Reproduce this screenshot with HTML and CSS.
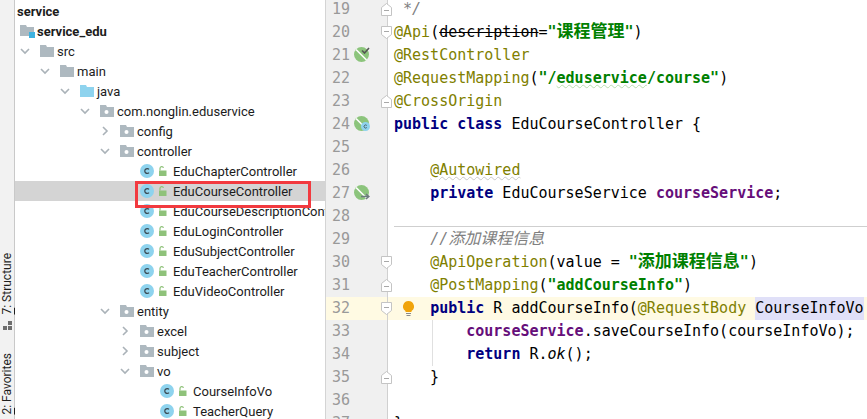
FILE: index.html
```html
<!DOCTYPE html>
<html lang="en">
<head>
<meta charset="utf-8">
<title>EduCourseController</title>
<link rel="stylesheet" href="styles.css">
</head>
<body>
<svg class="defs" width="0" height="0" aria-hidden="true">
  <symbol id="open" viewBox="0 0 10 8"><path d="M1 2l4 4 4-4" fill="none" stroke="#aab2b8" stroke-width="1.6"/></symbol>
  <symbol id="closed" viewBox="0 0 8 10"><path d="M2 1l4 4-4 4" fill="none" stroke="#aab2b8" stroke-width="1.6"/></symbol>
  <symbol id="folder" viewBox="0 0 14 12"><path d="M0 0h6l1 2h7v10H0z" fill="#aeb9c0"/></symbol>
  <symbol id="blue" viewBox="0 0 14 12"><path d="M0 0h6l1 2h7v10H0z" fill="#8ed3ee"/></symbol>
  <symbol id="pkg" viewBox="0 0 14 12"><path d="M0 0h6l1 2h7v10H0z" fill="#aeb9c0"/><circle cx="6.5" cy="7" r="2" fill="#fff"/></symbol>
  <symbol id="module" viewBox="0 0 16 13"><path d="M0 0h6l1 2h7v9H0z" fill="#aeb9c0"/><path d="M9 7h6v6H9z" fill="#3fb2e0"/></symbol>
  <symbol id="cls" viewBox="0 0 14 14"><circle cx="7" cy="7" r="7" fill="#8ed3ee"/><path d="M9 5.400A2.400 2.400 0 1 0 9 8.600" fill="none" stroke="#3b4a52" stroke-width="1.300"/></symbol>
  <symbol id="lock" viewBox="0 0 9 10"><path d="M1 4.500h7.500V10H1z" fill="#8fc27a"/><path d="M2 4.500V2.400a1.800 1.800 0 0 1 3.500-.5" fill="none" stroke="#8fc27a" stroke-width="1.200"/></symbol>
  <symbol id="bean" viewBox="0 0 15 15"><circle cx="7.500" cy="7.500" r="7.500" fill="#8cc47c"/><path d="M2 2.500L12.500 13" stroke="#fff" stroke-width="1.600"/></symbol>
</svg>

<div class="ide">
  <aside class="strip">
    <span class="tool"><u>7</u>: Structure</span>
    <svg class="tool-icon" width="11" height="9" viewBox="0 0 11 9"><path d="M6 0h4v4H6zM1 5h4v4H1zM6 5h4v4H6z" fill="#6e6e6e"/></svg>
    <span class="tool"><u>2</u>: Favorites</span>
  </aside>

  <nav class="tree">
    <div class="row root"><span class="bold">service</span></div>
    <div class="row mod"><svg class="ico-m"><use href="#module"/></svg><span class="bold">service_edu</span></div>
    <div class="row d0"><span class="arr"><svg class="a-o"><use href="#open"/></svg></span><svg class="ico"><use href="#folder"/></svg><span>src</span></div>
    <div class="row d1"><span class="arr"><svg class="a-o"><use href="#open"/></svg></span><svg class="ico"><use href="#folder"/></svg><span>main</span></div>
    <div class="row d2"><span class="arr"><svg class="a-o"><use href="#open"/></svg></span><svg class="ico"><use href="#blue"/></svg><span>java</span></div>
    <div class="row d3"><span class="arr"><svg class="a-o"><use href="#open"/></svg></span><svg class="ico"><use href="#pkg"/></svg><span>com.nonglin.eduservice</span></div>
    <div class="row d4"><span class="arr"><svg class="a-c"><use href="#closed"/></svg></span><svg class="ico"><use href="#pkg"/></svg><span>config</span></div>
    <div class="row d4"><span class="arr"><svg class="a-o"><use href="#open"/></svg></span><svg class="ico"><use href="#pkg"/></svg><span>controller</span></div>
    <div class="row d5"><span class="arr"></span><svg class="ico-c"><use href="#cls"/></svg><svg class="ico-l"><use href="#lock"/></svg><span>EduChapterController</span></div>
    <div class="row d5 sel"><span class="arr"></span><svg class="ico-c"><use href="#cls"/></svg><svg class="ico-l"><use href="#lock"/></svg><span>EduCourseController</span></div>
    <div class="row d5"><span class="arr"></span><svg class="ico-c"><use href="#cls"/></svg><svg class="ico-l"><use href="#lock"/></svg><span>EduCourseDescriptionController</span></div>
    <div class="row d5"><span class="arr"></span><svg class="ico-c"><use href="#cls"/></svg><svg class="ico-l"><use href="#lock"/></svg><span>EduLoginController</span></div>
    <div class="row d5"><span class="arr"></span><svg class="ico-c"><use href="#cls"/></svg><svg class="ico-l"><use href="#lock"/></svg><span>EduSubjectController</span></div>
    <div class="row d5"><span class="arr"></span><svg class="ico-c"><use href="#cls"/></svg><svg class="ico-l"><use href="#lock"/></svg><span>EduTeacherController</span></div>
    <div class="row d5"><span class="arr"></span><svg class="ico-c"><use href="#cls"/></svg><svg class="ico-l"><use href="#lock"/></svg><span>EduVideoController</span></div>
    <div class="row d4"><span class="arr"><svg class="a-o"><use href="#open"/></svg></span><svg class="ico"><use href="#pkg"/></svg><span>entity</span></div>
    <div class="row d5"><span class="arr"><svg class="a-c"><use href="#closed"/></svg></span><svg class="ico"><use href="#pkg"/></svg><span>excel</span></div>
    <div class="row d5"><span class="arr"><svg class="a-c"><use href="#closed"/></svg></span><svg class="ico"><use href="#pkg"/></svg><span>subject</span></div>
    <div class="row d5"><span class="arr"><svg class="a-o"><use href="#open"/></svg></span><svg class="ico"><use href="#pkg"/></svg><span>vo</span></div>
    <div class="row d6"><span class="arr"></span><svg class="ico-c"><use href="#cls"/></svg><svg class="ico-l"><use href="#lock"/></svg><span>CourseInfoVo</span></div>
    <div class="row d6"><span class="arr"></span><svg class="ico-c"><use href="#cls"/></svg><svg class="ico-l"><use href="#lock"/></svg><span>TeacherQuery</span></div>
    <div class="callout"></div>
  </nav>

  <main class="editor">
    <div class="line"><div class="gutter"><span class="num">19</span><svg class="fold"><path d="M.5 4.500L5.500.5l5 4v8h-10z"/><path class="m" d="M3 7.500h5"/></svg></div><pre class="code"> <i class="cm">*/</i></pre></div>
    <div class="line"><div class="gutter"><span class="num">20</span><svg class="fold"><path d="M.5.5h10v8l-5 4-5-4z"/><path class="m" d="M3 5.500h5"/></svg></div><pre class="code"><b class="an">@Api</b>(<s>description</s>=<b class="st">"<span class="zh">课程管理</span>"</b>)</pre></div>
    <div class="line"><div class="gutter"><span class="num">21</span><span class="mark"><svg class="bean"><use href="#bean"/></svg><svg class="over over-top" width="9" height="7" viewBox="0 0 9 7"><path d="M1 3.500l2.500 2.500L8 1" fill="none" stroke="#555" stroke-width="1.600"/></svg></span></div><pre class="code"><b class="an">@RestController</b></pre></div>
    <div class="line"><div class="gutter"><span class="num">22</span></div><pre class="code"><b class="an">@RequestMapping</b>(<b class="st">"/<span class="wavy">eduservice</span>/course"</b>)</pre></div>
    <div class="line"><div class="gutter"><span class="num">23</span><svg class="fold"><path d="M.5 4.500L5.500.5l5 4v8h-10z"/><path class="m" d="M3 7.500h5"/></svg></div><pre class="code"><b class="an">@CrossOrigin</b></pre></div>
    <div class="line"><div class="gutter"><span class="num">24</span><span class="mark"><svg class="bean"><use href="#bean"/></svg><svg class="over" width="9" height="9" viewBox="0 0 14 14"><use href="#cls"/></svg></span></div><pre class="code"><b class="kw">public class</b> EduCourseController {</pre></div>
    <div class="line"><div class="gutter"><span class="num">25</span></div><pre class="code"></pre></div>
    <div class="line"><div class="gutter"><span class="num">26</span></div><pre class="code">    <b class="an wavy-g">@Autowired</b></pre></div>
    <div class="line"><div class="gutter"><span class="num">27</span><span class="mark"><svg class="bean"><use href="#bean"/></svg><svg class="over" width="9" height="7" viewBox="0 0 9 7"><path d="M0 3.500h7M5 1l3 2.500L5 6" fill="none" stroke="#6e7a80" stroke-width="1.400"/></svg></span></div><pre class="code">    <b class="kw">private</b> EduCourseService <b class="fd">courseService</b>;</pre></div>
    <div class="line"><div class="gutter"><span class="num">28</span></div><pre class="code"></pre></div>
    <div class="line sep"><div class="gutter"><span class="num">29</span></div><pre class="code">    <i class="cm">//<span class="zh-c">添加课程信息</span></i></pre></div>
    <div class="line"><div class="gutter"><span class="num">30</span><svg class="fold"><path d="M.5.5h10v8l-5 4-5-4z"/><path class="m" d="M3 5.500h5"/></svg></div><pre class="code">    <b class="an">@ApiOperation</b>(value = <b class="st">"<span class="zh">添加课程信息</span>"</b>)</pre></div>
    <div class="line"><div class="gutter"><span class="num">31</span><svg class="fold"><path d="M.5 4.500L5.500.5l5 4v8h-10z"/><path class="m" d="M3 7.500h5"/></svg></div><pre class="code">    <b class="an">@PostMapping</b>(<b class="st">"addCourseInfo"</b>)</pre></div>
    <div class="line cur"><div class="gutter"><span class="num">32</span><svg class="fold"><path d="M.5.5h10v8l-5 4-5-4z"/><path class="m" d="M3 5.500h5"/></svg></div><pre class="code">    <b class="kw">public</b> R addCourseInfo(<b class="an">@RequestBody</b> <span class="hl">CourseInfoVo</span></pre><svg class="bulb" width="11" height="16" viewBox="0 0 11 16"><path d="M5.500 0a5.500 5.500 0 0 1 3 10.100V11h-6v-.9A5.500 5.500 0 0 1 5.500 0z" fill="#f0a30a"/><path d="M3 12.500h5M3.500 14.500h4" stroke="#8a8a8a"/></svg></div>
    <div class="line guide"><div class="gutter"><span class="num">33</span></div><pre class="code">        <b class="fd">courseService</b>.saveCourseInfo(courseInfoVo);</pre></div>
    <div class="line guide"><div class="gutter"><span class="num">34</span></div><pre class="code">        <b class="kw">return</b> R.<i>ok</i>();</pre></div>
    <div class="line"><div class="gutter"><span class="num">35</span><svg class="fold"><path d="M.5 4.500L5.500.5l5 4v8h-10z"/><path class="m" d="M3 7.500h5"/></svg></div><pre class="code">    }</pre></div>
    <div class="line"><div class="gutter"><span class="num">36</span></div><pre class="code"></pre></div>
    <div class="line"><div class="gutter"><span class="num">37</span></div><pre class="code">}</pre></div>
  </main>
</div>
</body>
</html>
```

FILE: styles.css
```css
* { box-sizing: border-box; }
html, body { margin: 0; height: 100%; overflow: hidden; background: #fff; }
.defs { position: absolute; }

.ide { display: flex; width: 867px; height: 419px; overflow: hidden; }

/* left tool strip */
.strip {
  width: 15px; flex: none; background: #f2f2f2; border-right: 1px solid #c9c9c9;
  display: flex; flex-direction: column; align-items: center; justify-content: flex-end;
  padding: 0 0 4px 0;
  font: 12px/13px Roboto, sans-serif; color: #1f1f1f;
}
.tool { writing-mode: vertical-rl; transform: rotate(180deg); white-space: nowrap; }
.tool-icon { margin: 7px 0 23px; }

/* project tree */
.tree {
  width: 311px; flex: none; position: relative; overflow: hidden;
  border-right: 1px solid #d4d4d4; padding-top: 1px;
  font: 13px/20px Roboto, sans-serif; color: #1c1c1c;
}
.row { height: 20px; display: flex; align-items: center; white-space: nowrap; }
.row span:not(.arr) { padding-top: 2px; }
.bold { font-weight: 700; }
.root { padding-left: 2px; }
.mod { padding-left: 5px; }
.d0 { padding-left: 0; }
.d1 { padding-left: 20px; }
.d2 { padding-left: 40px; }
.d3 { padding-left: 60px; }
.d4 { padding-left: 80px; }
.d5 { padding-left: 100px; }
.d6 { padding-left: 120px; }
.sel { background: #d4d4d4; }
.arr { width: 25px; flex: none; display: flex; align-items: center; padding-left: 5px; }
.a-o { width: 10px; height: 8px; }
.a-c { width: 8px; height: 10px; margin-left: 1px; }
.ico { width: 14px; height: 12px; margin-right: 3px; flex: none; }
.ico-m { width: 16px; height: 13px; margin-right: 1px; flex: none; }
.ico-c { width: 14px; height: 14px; margin-right: 4px; flex: none; }
.ico-l { width: 9px; height: 10px; margin-right: 6px; flex: none; }
.callout {
  position: absolute; left: 120px; top: 181px; width: 176px; height: 27px;
  border: 3px solid #f23a3f;
}

/* editor */
.editor { flex: 1; min-width: 0; margin-top: -2px; font: 15px/23px "DejaVu Sans Mono", monospace; color: #000; }
.line { height: 23px; display: flex; position: relative; }
.gutter {
  width: 62px; flex: none; height: 23px; background: #f0f0f0; border-right: 1px solid #d0d0d0;
  position: relative; padding-left: 6px;
}
.num { color: #999; }
.mark { position: absolute; left: 28px; top: 3px; width: 16px; height: 15px; }
.bean { position: absolute; left: 0; top: 0; width: 15px; height: 15px; }
.over { position: absolute; right: 0; bottom: 0; }
.over-top { top: 0; bottom: auto; }
.fold { position: absolute; left: 55px; top: 5px; width: 11px; height: 13px; z-index: 1; }
.fold path { fill: #fff; stroke: #c4c4c4; }
.fold path.m { stroke: #a8a8a8; fill: none; }
.code { margin: 0 0 0 6px; font: inherit; white-space: pre; flex: 1; height: 23px; position: relative; }
.an { font-weight: 400; color: #808000; }
.kw { font-weight: 700; color: #000080; }
.st { font-weight: 700; color: #008000; }
.fd { font-weight: 700; color: #660e7a; }
.cm { color: #808080; font-style: italic; }
.zh { font: 700 17px/1 "Noto Sans CJK SC", sans-serif; }
.zh-c { font: italic 16px/1 "Noto Sans CJK SC", sans-serif; }
.wavy { text-decoration: underline wavy #b9dcb0 1px; }
.wavy-g { text-decoration: underline wavy #c8c8c8 1px; }
.sep .code::before { content: ""; position: absolute; left: 0; right: 0; top: -2px; border-top: 1px solid #cfcfcf; }
.cur { background: #fffae3; }
.cur .gutter { background: #fffae3; }
.hl { background: #e0e0f8; display: inline-block; height: 23px; }
.bulb { position: absolute; left: 77px; top: 4px; }
.guide .code::before { content: ""; position: absolute; left: 38px; top: 0; bottom: 0; border-left: 1px solid #e0e0e0; }
```
